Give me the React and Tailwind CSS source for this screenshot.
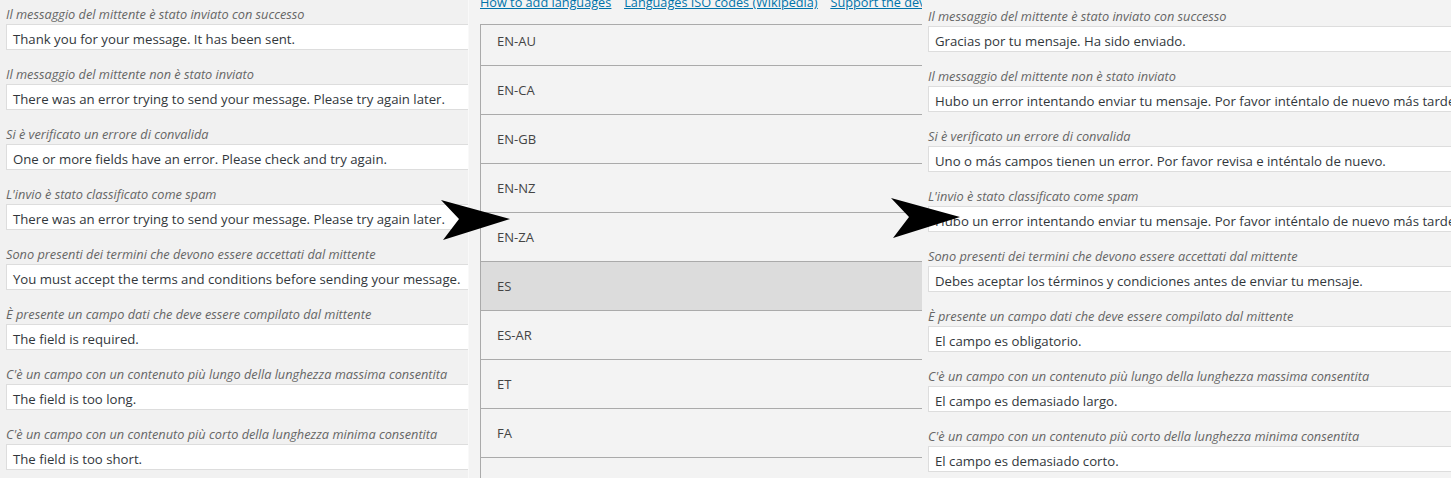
import React from 'react'

const labels = [
  "Il messaggio del mittente è stato inviato con successo",
  "Il messaggio del mittente non è stato inviato",
  "Si è verificato un errore di convalida",
  "L'invio è stato classificato come spam",
  "Sono presenti dei termini che devono essere accettati dal mittente",
  "È presente un campo dati che deve essere compilato dal mittente",
  "C'è un campo con un contenuto più lungo della lunghezza massima consentita",
  "C'è un campo con un contenuto più corto della lunghezza minima consentita",
];

const english = [
  "Thank you for your message. It has been sent.",
  "There was an error trying to send your message. Please try again later.",
  "One or more fields have an error. Please check and try again.",
  "There was an error trying to send your message. Please try again later.",
  "You must accept the terms and conditions before sending your message.",
  "The field is required.",
  "The field is too long.",
  "The field is too short.",
];

const spanish = [
  "Gracias por tu mensaje. Ha sido enviado.",
  "Hubo un error intentando enviar tu mensaje. Por favor inténtalo de nuevo más tarde.",
  "Uno o más campos tienen un error. Por favor revisa e inténtalo de nuevo.",
  "Hubo un error intentando enviar tu mensaje. Por favor inténtalo de nuevo más tarde.",
  "Debes aceptar los términos y condiciones antes de enviar tu mensaje.",
  "El campo es obligatorio.",
  "El campo es demasiado largo.",
  "El campo es demasiado corto.",
];

const langs = ["EN-AU", "EN-CA", "EN-GB", "EN-NZ", "EN-ZA", "ES", "ES-AR", "ET", "FA", ""];

function Field({ label, value }) {
  return (
    <div className='mb-[14px]'>
      <div className='h-[20px] leading-[20px] text-[12.75px] italic text-[#666] whitespace-nowrap'>{label}</div>
      <div className='h-[26px] w-[1200px] border border-[#ddd] bg-white pl-[6px] pt-[2px] leading-[24px] text-[13.2px] text-[#32373c] whitespace-nowrap'>
        {value}
      </div>
    </div>
  )
}

function Arrow({ className }) {
  return (
    <svg className={className} width="72" height="44" viewBox="0 0 72 44">
      <path d="M1 2 L70 21 L3 42 L19 21 Z" fill="#000" />
    </svg>
  )
}

export default function App() {
  return (
    <div className='relative flex h-[478px] w-[1451px] overflow-hidden bg-[#f3f3f3]' style={{ fontFamily: '"Open Sans", "Noto Sans", sans-serif' }}>
      {/* left: english strings */}
      <div className='w-[468px] shrink-0 overflow-hidden bg-[#f1f1f1] pt-[4px] pl-[6px]'>
        {labels.map((l, i) => <Field key={i} label={l} value={english[i]} />)}
      </div>

      {/* middle: language list */}
      <div className='w-[454px] shrink-0 overflow-hidden border-l border-[#f9f9f9] bg-[#f3f3f3] pl-[11px]'>
        <div className='h-[24px] overflow-hidden'>
          <div className='-mt-[8px] flex gap-[13px] whitespace-nowrap text-[12.7px] leading-[20px] text-[#0073aa] underline'>
            <a href="#">How to add languages</a>
            <a href="#">Languages ISO codes (Wikipedia)</a>
            <a href="#">Support the developer</a>
          </div>
        </div>
        <div className='w-[600px] border-t border-l border-[#aaa]'>
          {langs.map((code, i) => (
            <div
              key={i}
              className={`border-b border-[#aaa] pl-[16px] text-[13px] leading-[18px] text-[#444] ${i === 0 ? 'h-[41px] pt-[7px]' : 'h-[49px] pt-[15px]'} ${code === 'ES' ? 'bg-[#dcdcdc]' : ''}`}
            >
              {code}
            </div>
          ))}
        </div>
      </div>

      {/* right: spanish strings */}
      <div className='flex-1 overflow-hidden bg-[#f3f3f3] pt-[6px] pl-[6px]'>
        {labels.map((l, i) => <Field key={i} label={l} value={spanish[i]} />)}
      </div>

      <Arrow className='absolute left-[440px] top-[198px]' />
      <Arrow className='absolute left-[890px] top-[196px]' />
    </div>
  )
}
